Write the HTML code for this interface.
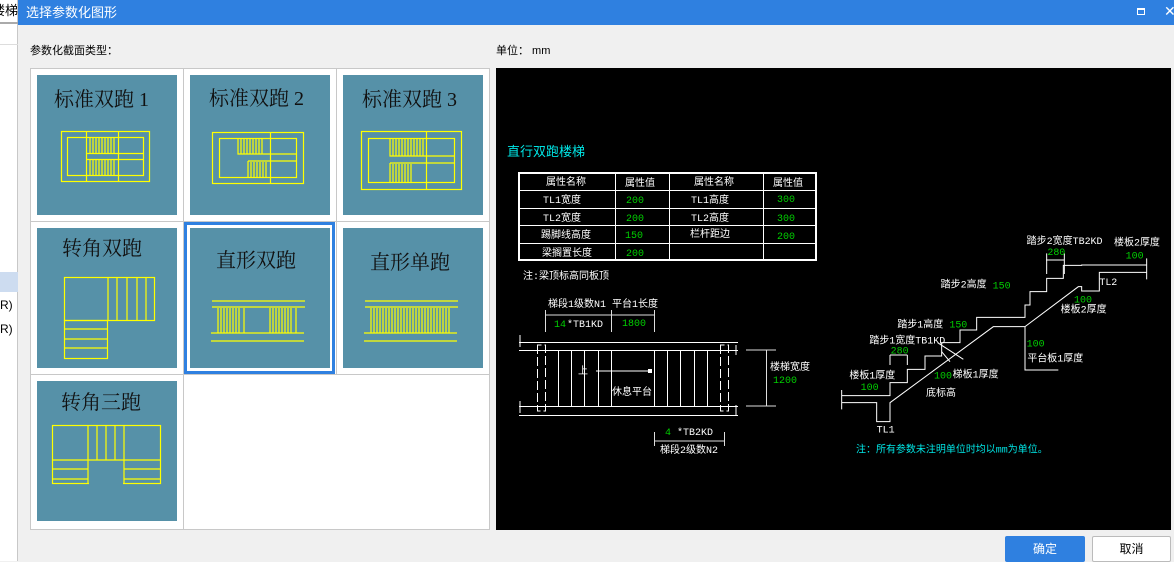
<!DOCTYPE html>
<html><head><meta charset="utf-8"><style>
*{margin:0;padding:0;box-sizing:border-box}
body{width:1174px;height:561px;overflow:hidden;background:#f0f0f0;font-family:"Liberation Sans","Noto Sans CJK SC",sans-serif;position:relative}
.abs{position:absolute}
</style></head><body>
<div class="abs" style="left:0;top:0;width:18px;height:561px;background:#fff;border-right:1px solid #c8c8c8"></div>
<div class="abs" style="left:0;top:0;width:18px;height:22px;font-size:13px;line-height:22px;color:#000;overflow:hidden;white-space:nowrap;direction:rtl">楼梯</div>
<div class="abs" style="left:0;top:22px;width:18px;height:2px;background:#aaa"></div>
<div class="abs" style="left:0;top:44px;width:18px;height:1px;background:#ddd"></div>
<div class="abs" style="left:0;top:272px;width:18px;height:20px;background:#cddcf0"></div>
<div class="abs" style="left:0;top:298px;font-size:12px">R)</div>
<div class="abs" style="left:0;top:322px;font-size:12px">R)</div>
<div class="abs" style="left:18px;top:0;width:1156px;height:25px;background:#2f80e0;color:#fff;font-size:13px;line-height:25px;padding-left:8px">选择参数化图形</div>
<div class="abs" style="left:1137px;top:8px;width:8px;height:7px;border:1px solid #fff;border-top-width:2px"></div>
<div class="abs" style="left:1164px;top:3px;color:#fff;font-size:14px">✕</div>
<div class="abs" style="left:30px;top:42px;font-size:11px;color:#000">参数化截面类型：</div>
<div class="abs" style="left:496px;top:42px;font-size:11px;color:#000">单位： mm</div>
<div class="abs" style="left:30px;top:68px;width:460px;height:462px;background:#fff;border:1px solid #c8c8c8"></div>
<div class="abs" style="left:496px;top:68px;width:675px;height:462px;background:#000"></div>
<div class="abs" style="left:1005px;top:536px;width:80px;height:26px;background:#2f80e0;color:#fff;font-size:12px;text-align:center;line-height:26px;border-radius:2px">确定</div>
<div class="abs" style="left:1092px;top:536px;width:79px;height:26px;background:#fff;border:1px solid #bbb;color:#000;font-size:12px;text-align:center;line-height:24px;border-radius:2px">取消</div>

<svg class="abs" style="left:0;top:0" width="1174" height="561" xmlns="http://www.w3.org/2000/svg">
<g stroke="#c8c8c8" stroke-width="1" fill="none">
<line x1="183.5" y1="68" x2="183.5" y2="530"/><line x1="336.5" y1="68" x2="336.5" y2="374"/>
<line x1="30" y1="221.5" x2="490" y2="221.5"/><line x1="30" y1="374.5" x2="490" y2="374.5"/>
</g>
<rect x="185.5" y="223.5" width="148" height="149" fill="none" stroke="#2f80e0" stroke-width="3"/>
<g fill="#5691a8">
<rect x="37" y="75" width="140" height="140"/><rect x="190" y="75" width="140" height="140"/><rect x="343" y="75" width="140" height="140"/>
<rect x="37" y="228" width="140" height="140"/><rect x="190" y="228" width="140" height="140"/><rect x="343" y="228" width="140" height="140"/>
<rect x="37" y="381" width="140" height="140"/>
</g>
<g font-family="'Liberation Serif','Noto Serif CJK SC',serif" font-size="20" fill="#111">
<text x="54" y="106">标准双跑 1</text><text x="209" y="105">标准双跑 2</text><text x="362" y="106">标准双跑 3</text>
<text x="62" y="255">转角双跑</text><text x="216" y="267">直形双跑</text><text x="370" y="269">直形单跑</text>
<text x="61" y="409">转角三跑</text>
</g>
<g stroke="#ffff00" stroke-width="1.2" fill="none">
<rect x="61.5" y="131.5" width="88" height="50"/><rect x="67.5" y="137.5" width="76" height="38"/>
<line x1="86.5" y1="131" x2="86.5" y2="182"/><line x1="118.5" y1="131" x2="118.5" y2="182"/>
<line x1="86" y1="153.5" x2="144" y2="153.5"/><line x1="86" y1="159.5" x2="144" y2="159.5"/>
<path d="M90 138v15M93 138v15M96 138v15M99 138v15M102 138v15M105 138v15M108 138v15M111 138v15M114 138v15M90 160v15M93 160v15M96 160v15M99 160v15M102 160v15M105 160v15M108 160v15M111 160v15M114 160v15"/>
<rect x="212.5" y="132.5" width="91" height="51"/><rect x="219.5" y="138.5" width="77" height="39"/>
<line x1="270.5" y1="132" x2="270.5" y2="184"/>
<path d="M238 138v16h59M248 161v17M248 161h49"/>
<path d="M241 139v15M244 139v15M247 139v15M250 139v15M253 139v15M256 139v15M259 139v15M262 139v15M251 162v15M254 162v15M257 162v15M260 162v15M263 162v15M266 162v15"/>
<rect x="361.5" y="131.5" width="100" height="58"/><rect x="368.5" y="138.5" width="86" height="44"/>
<line x1="426.5" y1="131" x2="426.5" y2="190"/>
<path d="M390 138v18h65M390 163v19M390 163h65"/>
<path d="M393 139v17M396 139v17M399 139v17M402 139v17M405 139v17M408 139v17M411 139v17M414 139v17M417 139v17M420 139v17M423 139v17M393 164v18M396 164v18M399 164v18M402 164v18M405 164v18M408 164v18M411 164v18"/>
<rect x="64.5" y="277.5" width="90" height="43"/><rect x="64.5" y="320.5" width="43" height="38"/>
<path d="M108 278v43M117 278v43M127 278v43M137 278v43M146 278v43M64 329h44M64 339h44M64 348h44"/>
<path d="M212 301h93M212 307h93M211 333h93M211 341h93"/>
<path d="M218 308v25M221 308v25M224 308v25M227 308v25M230 308v25M233 308v25M236 308v25M239 308v25M244 308v25M270 308v25M273 308v25M276 308v25M279 308v25M282 308v25M285 308v25M288 308v25M291 308v25M296 308v25"/>
<path d="M365 301h93M365 307h93M364 333h93M364 341h93"/>
<path d="M371 308v25M374 308v25M377 308v25M380 308v25M383 308v25M386 308v25M389 308v25M392 308v25M395 308v25M398 308v25M401 308v25M404 308v25M407 308v25M410 308v25M413 308v25M416 308v25M419 308v25M422 308v25M425 308v25M428 308v25M431 308v25M434 308v25M437 308v25M440 308v25M443 308v25M446 308v25M449 308v25"/>
<rect x="52.5" y="425.5" width="108" height="58"/>
<path d="M97 425v35M106 425v35M115 425v35M52 460h108M52 469h36M52 479h36M124 469h36M124 479h36"/>
</g>
<rect x="89" y="461" width="34" height="24" fill="#5691a8"/>
<path d="M88 425v59M124 425v59" stroke="#ffff00" stroke-width="1.2"/>

<g font-family="'Liberation Mono','Noto Sans CJK SC',monospace" font-size="10">
<text x="507" y="156" fill="#00e5e5" font-size="13" font-family="'Liberation Sans','Noto Sans CJK SC',sans-serif">直行双跑楼梯</text>
<g stroke="#fff" fill="none">
<rect x="519" y="173" width="297" height="87" stroke-width="2"/>
<path d="M615.5 173v87M669.5 173v87M763.5 173v87M519 190.5h297M519 208.5h297M519 225.5h297M519 243.5h297"/>
</g>
<g fill="#fff">
<text x="546" y="185">属性名称</text><text x="625" y="186">属性值</text><text x="694" y="185">属性名称</text><text x="773" y="186">属性值</text>
<text x="543" y="203">TL1宽度</text><text x="691" y="203">TL1高度</text>
<text x="543" y="221">TL2宽度</text><text x="691" y="221">TL2高度</text>
<text x="541" y="238">踢脚线高度</text><text x="690" y="237">栏杆距边</text>
<text x="542" y="256">梁搁置长度</text>
<text x="523" y="279">注:梁顶标高同板顶</text>
<text x="548" y="307">梯段1级数N1 平台1长度</text>
<text x="567" y="327">*TB1KD</text>
<text x="578" y="374">上</text><text x="612" y="395">休息平台</text>
<text x="770" y="370">楼梯宽度</text>
<text x="677" y="435">*TB2KD</text><text x="660" y="453">梯段2级数N2</text>
</g>
<g fill="#00d000">
<text x="626" y="203">200</text><text x="777" y="202">300</text>
<text x="626" y="221">200</text><text x="777" y="221">300</text>
<text x="625" y="238">150</text><text x="777" y="239">200</text>
<text x="626" y="256">200</text>
<text x="554" y="327">14</text><text x="622" y="326">1800</text>
<text x="773" y="383">1200</text><text x="665" y="435">4</text>
</g>
<g stroke="#ddd" fill="none">
<path d="M545 315h109M545.5 310v22M611.5 310v22M654.5 310v22"/>
<path d="M746 350h30M746 406h30M766.5 350v56"/>
<path d="M654 441h70M654.5 432v14M724.5 432v14"/>
</g>
<g stroke="#fff" fill="none">
<path d="M519 342.5h219M519 350.5h219M519 406.5h219M519 415.5h219"/>
<path d="M520 335v12M520 401v12M736 345v10M736 405v10"/>
<path d="M558.5 350v56M571.5 350v56M584.5 350v56M598.5 350v56M611.5 350v56M654.5 350v56M667.5 350v56M680.5 350v56M694.5 350v56M707.5 350v56"/>
<path d="M537.5 345v66h8v-66zM720.5 345v66h8v-66z" stroke-dasharray="9 3"/>
<path d="M596 371h54"/>
</g>
<rect x="648" y="369" width="4" height="4" fill="#fff"/>
</g>

<g transform="translate(830,220) scale(0.33333)" font-family="'Liberation Mono','Noto Sans CJK SC',monospace" font-size="30">
<g stroke="#fff" stroke-width="3" fill="none">
<path d="M35 527H180V488H232V448H285V408H335V368H390V330H440V292H585V255H600V215H650V175H700V136H755V135H950"/>
<path d="M35 548H140V605H180V548L490 320H585L745 200H755V213H808V157H950"/>
<path d="M585 320V450H685M35 510V568M950 115V178"/>
<path d="M648 120h55M650 100v62M703 100v62M180 405h52M180 405v30M232 405v30"/>
<path d="M323 368L400 418M335 395L360 425"/>
</g>
<g fill="#fff">
<text x="590" y="72">踏步2宽度TB2KD</text><text x="852" y="77">楼板2厚度</text>
<text x="808" y="195">TL2</text><text x="332" y="203">踏步2高度</text>
<text x="692" y="277">楼板2厚度</text><text x="202" y="322">踏步1高度</text>
<text x="592" y="425">平台板1厚度</text><text x="118" y="370">踏步1宽度TB1KD</text>
<text x="58" y="475">楼板1厚度</text><text x="368" y="472">梯板1厚度</text>
<text x="288" y="528">底标高</text><text x="140" y="637">TL1</text>
</g>
<g fill="#00d000">
<text x="652" y="105">280</text><text x="887" y="115">100</text><text x="488" y="205">150</text>
<text x="732" y="247">100</text><text x="358" y="322">150</text><text x="590" y="380">100</text>
<text x="182" y="400">280</text><text x="312" y="475">100</text><text x="92" y="510">100</text>
</g>
<text x="78" y="698" fill="#00e5e5">注：所有参数未注明单位时均以mm为单位。</text>
</g>
</svg>
</body></html>
